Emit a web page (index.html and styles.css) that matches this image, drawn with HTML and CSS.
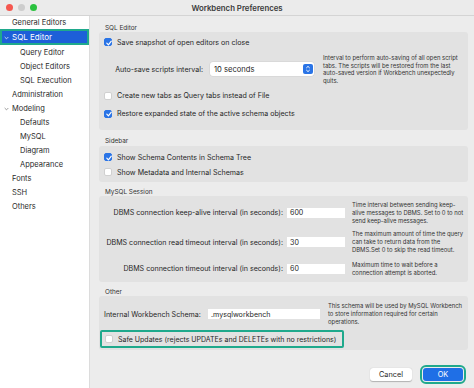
FILE: index.html
```html
<!DOCTYPE html>
<html lang="en">
<head>
    <meta charset="UTF-8">
    <meta name="viewport" content="width=device-width, initial-scale=1.0">
    <title>Workbench Preferences</title>
    <link rel="stylesheet" href="styles.css">
</head>
<body>
<div class="window">
    <div class="titlebar">
        <div class="lights">
            <span class="light red"></span>
            <span class="light gray"></span>
            <span class="light green"></span>
        </div>
        <div class="title">Workbench Preferences</div>
    </div>

    <div class="body">
        <nav class="sidebar">
            <div class="item first">General Editors</div>
            <div class="item selected">
                <svg class="chev" viewBox="0 0 6 4"><polyline points="0.8,0.8 3,3 5.2,0.8"/></svg>
                SQL Editor
            </div>
            <div class="item sub">Query Editor</div>
            <div class="item sub">Object Editors</div>
            <div class="item sub">SQL Execution</div>
            <div class="item">Administration</div>
            <div class="item">
                <svg class="chev" viewBox="0 0 6 4"><polyline points="0.8,0.8 3,3 5.2,0.8"/></svg>
                Modeling
            </div>
            <div class="item sub">Defaults</div>
            <div class="item sub">MySQL</div>
            <div class="item sub">Diagram</div>
            <div class="item sub">Appearance</div>
            <div class="item">Fonts</div>
            <div class="item">SSH</div>
            <div class="item">Others</div>
        </nav>

        <main class="content">
            <div class="group-label first">SQL Editor</div>
            <div class="group g-editor">
                <div class="check-row">
                    <span class="check on"><svg viewBox="0 0 8 8"><polyline points="1.8,4.2 3.4,5.8 6.3,2.2"/></svg></span>
                    Save snapshot of open editors on close
                </div>
                <div class="field-row auto-row">
                    <label class="field-label w-auto">Auto-save scripts interval:</label>
                    <div class="popup">
                        10 seconds
                        <span class="stepper">
                            <svg viewBox="0 0 8 10"><polyline points="2.3,4 4,2.4 5.7,4"/><polyline points="2.3,6 4,7.6 5.7,6"/></svg>
                        </span>
                    </div>
                    <p class="desc d-auto">Interval to perform auto-saving of all open script tabs. The scripts will be restored from the last auto-saved version if Workbench unexpectedly quits.</p>
                </div>
                <div class="check-row r-create">
                    <span class="check"></span>
                    Create new tabs as Query tabs instead of File
                </div>
                <div class="check-row r-restore">
                    <span class="check on"><svg viewBox="0 0 8 8"><polyline points="1.8,4.2 3.4,5.8 6.3,2.2"/></svg></span>
                    Restore expanded state of the active schema objects
                </div>
            </div>

            <div class="group-label l-sidebar">Sidebar</div>
            <div class="group g-sidebar">
                <div class="check-row">
                    <span class="check on"><svg viewBox="0 0 8 8"><polyline points="1.8,4.2 3.4,5.8 6.3,2.2"/></svg></span>
                    Show Schema Contents in Schema Tree
                </div>
                <div class="check-row r-meta">
                    <span class="check"></span>
                    Show Metadata and Internal Schemas
                </div>
            </div>

            <div class="group-label">MySQL Session</div>
            <div class="group g-session">
                <div class="field-row">
                    <label class="field-label w-session">DBMS connection keep-alive interval (in seconds):</label>
                    <div class="input num">600</div>
                    <p class="desc d-session">Time interval between sending keep-alive messages to DBMS. Set to 0 to not send keep-alive messages.</p>
                </div>
                <div class="field-row r-read">
                    <label class="field-label w-session">DBMS connection read timeout interval (in seconds):</label>
                    <div class="input num">30</div>
                    <p class="desc d-session">The maximum amount of time the query can take to return data from the DBMS.Set 0 to skip the read timeout.</p>
                </div>
                <div class="field-row r-timeout">
                    <label class="field-label w-session">DBMS connection timeout interval (in seconds):</label>
                    <div class="input num">60</div>
                    <p class="desc d-session">Maximum time to wait before a connection attempt is aborted.</p>
                </div>
            </div>

            <div class="group-label">Other</div>
            <div class="group g-other">
                <div class="field-row">
                    <label class="field-label w-other">Internal Workbench Schema:</label>
                    <div class="input schema">.mysqlworkbench</div>
                    <p class="desc d-other">This schema will be used by MySQL Workbench to store information required for certain operations.</p>
                </div>
                <div class="check-row safe">
                    <span class="check"></span>
                    Safe Updates (rejects UPDATEs and DELETEs with no restrictions)
                </div>
            </div>

            <div class="actions">
                <button class="btn cancel">Cancel</button>
                <button class="btn ok">OK</button>
            </div>
        </main>
    </div>
</div>
</body>
</html>
```

FILE: styles.css
```css
body {
    margin: 0;
    padding: 0;
    background-color: #ececec;
    font-family: 'Inter', 'Liberation Sans', sans-serif;
    color: #262626;
}

.window {
    width: 474px;
    height: 388px;
    display: flex;
    flex-direction: column;
    overflow: hidden;
}

/* title bar */
.titlebar {
    height: 16px;
    box-sizing: border-box;
    background-color: #ebebeb;
    border-bottom: 1px solid #d4d4d4;
    display: flex;
    align-items: center;
    position: relative;
}

.lights {
    display: flex;
    gap: 5px;
    padding-left: 6px;
}

.light {
    width: 7px;
    height: 7px;
    border-radius: 50%;
    display: block;
}

.light.red { background-color: #f5574f; }
.light.gray { background-color: #cdcdcd; }
.light.green { background-color: #2bc23f; }

.title {
    position: absolute;
    left: 0;
    right: 0;
    text-align: center;
    font-size: 7.8px;
    font-weight: 600;
    color: #3a3a3a;
}

.body {
    flex: 1;
    display: flex;
}

/* sidebar */
.sidebar {
    width: 90px;
    background-color: #fff;
    border-right: 1px solid #dcdcdc;
    box-sizing: border-box;
    font-size: 7.5px;
    color: #2a2a2a;
}

.item {
    height: 14px;
    display: flex;
    align-items: center;
    padding-left: 12px;
    position: relative;
}

.item.first {
    height: 13px;
}

.item.sub {
    padding-left: 20px;
}

.item .chev {
    position: absolute;
    left: 4px;
    top: 6px;
    width: 5px;
    height: 4px;
    fill: none;
    stroke: #7a7a7a;
    stroke-width: 0.9;
}

.item.selected {
    height: 16px;
    box-sizing: border-box;
    background-color: #1d5fd8;
    color: #fff;
    border: 2px solid #1fa98c;
    padding-left: 10px;
    font-size: 8px;
}

.item.selected .chev {
    left: 2px;
    top: 5px;
    stroke: #fff;
}

/* content */
.content {
    flex: 1;
    padding: 0 6px 0 9px;
    font-size: 7.1px;
    white-space: nowrap;
}

.group-label {
    height: 14px;
    box-sizing: border-box;
    padding: 6px 0 0 6px;
    line-height: 8px;
    font-size: 6.4px;
    color: #333;
}

.group-label.first {
    height: 16px;
    padding-top: 8px;
}

.group-label.l-sidebar {
    height: 16px;
    padding-top: 7px;
}

.group {
    background-color: #e2e2e2;
    border-radius: 3px;
    box-sizing: border-box;
    padding-left: 5px;
}

.g-editor { height: 98px; padding-top: 5px; }
.g-sidebar { height: 36px; padding-top: 6px; }
.g-session { height: 86px; padding-top: 5px; }
.g-other { height: 54px; padding-top: 6px; }

.check-row {
    height: 10px;
    display: flex;
    align-items: center;
    gap: 5px;
}

.r-create { margin-top: 6px; }
.r-restore { margin-top: 8px; }
.r-meta { margin-top: 5px; }

.check {
    width: 8px;
    height: 8px;
    box-sizing: border-box;
    border-radius: 2px;
    background-color: #fff;
    border: 0.5px solid #d0d0d0;
    display: block;
    flex-shrink: 0;
}

.check.on {
    background-color: #2a74e6;
    border-color: #2a74e6;
}

.check svg {
    display: block;
    width: 8px;
    height: 8px;
    margin: -0.5px;
    fill: none;
    stroke: #fff;
    stroke-width: 1.2;
    stroke-linecap: round;
    stroke-linejoin: round;
}

.field-row {
    display: flex;
    align-items: center;
}

.auto-row { margin-top: 7px; }
.r-read { margin-top: 6px; }
.r-timeout { margin-top: 7px; }

.field-label {
    text-align: right;
    flex-shrink: 0;
}

.w-auto { width: 99px; margin-right: 7px; }
.w-session { width: 179px; margin-right: 4px; }
.w-other { width: 94px; margin-right: 10px; }

.popup {
    width: 104px;
    height: 14px;
    box-sizing: border-box;
    background-color: #fff;
    border-radius: 3px;
    box-shadow: 0 0 0 0.5px #cfcfcf;
    display: flex;
    align-items: center;
    justify-content: space-between;
    padding: 0 1px 0 4px;
    font-size: 7.6px;
    margin-right: 9px;
    flex-shrink: 0;
}

.stepper {
    width: 10px;
    height: 10px;
    background-color: #2a74e6;
    border-radius: 2px;
    display: block;
}

.stepper svg {
    display: block;
    width: 10px;
    height: 10px;
    fill: none;
    stroke: #fff;
    stroke-width: 1;
}

.input {
    height: 10px;
    background-color: #fff;
    display: flex;
    align-items: center;
    padding-left: 3px;
    box-sizing: border-box;
    flex-shrink: 0;
}

.input.num {
    width: 58px;
    margin-right: 7px;
}

.input.schema {
    width: 112px;
    margin-right: 8px;
}

.desc {
    margin: 0;
    font-size: 5.9px;
    line-height: 8px;
    color: #333;
    white-space: normal;
}

.d-auto { width: 142px; line-height: 7.7px; }
.d-session { width: 116px; line-height: 7.8px; }
.d-other { width: 140px; }

.check-row.safe {
    margin-top: 4px;
    height: 18px;
    width: 244px;
    margin-left: -4px;
    padding-left: 3px;
    box-sizing: border-box;
    border: 2px solid #1fa98c;
    border-radius: 2px;
    font-size: 7px;
}

/* buttons */
.actions {
    display: flex;
    justify-content: flex-end;
    gap: 11px;
    padding: 18px 5px 0 0;
}

.btn {
    font-family: 'Inter', 'Liberation Sans', sans-serif;
    font-size: 7.3px;
    height: 13px;
    border: none;
    border-radius: 3px;
    padding: 0;
    cursor: pointer;
}

.btn.cancel {
    width: 42px;
    background-color: #fff;
    color: #262626;
    box-shadow: 0 0.5px 1px rgba(0, 0, 0, 0.25);
}

.btn.ok {
    width: 40px;
    background-color: #1f6fe6;
    color: #fff;
    outline: 2px solid #1fa98c;
    outline-offset: 1px;
}
```
